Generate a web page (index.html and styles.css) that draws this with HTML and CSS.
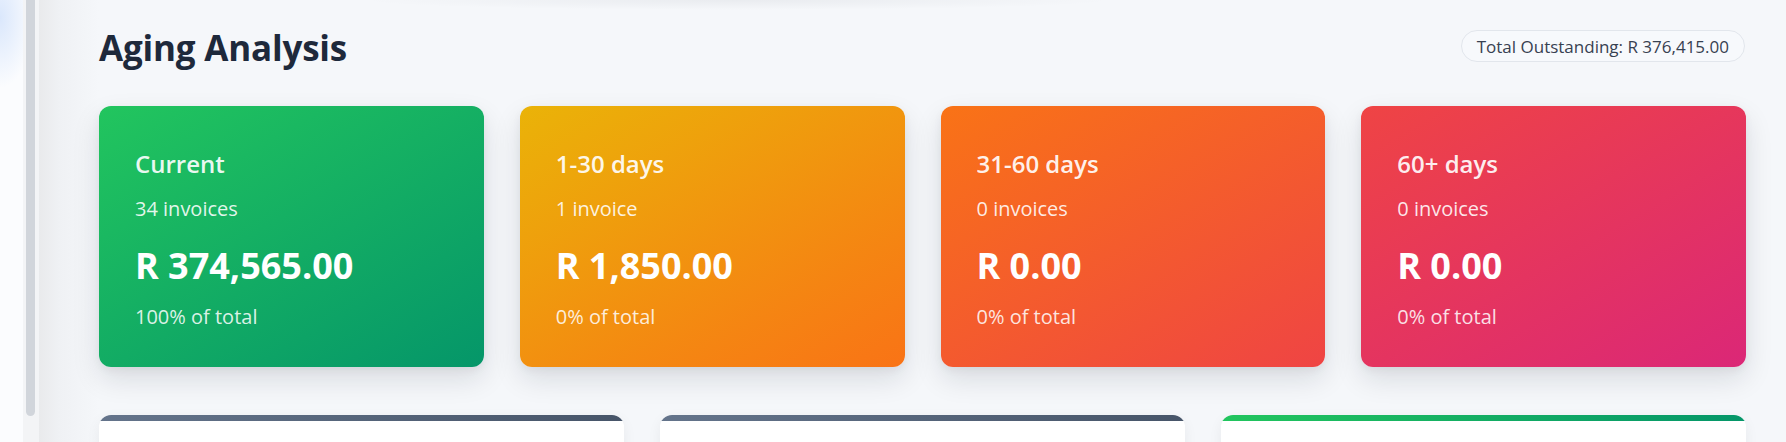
FILE: index.html
```html
<!DOCTYPE html>
<html lang="en">
<head>
<meta charset="utf-8">
<title>Aging Analysis</title>
<link rel="stylesheet" href="styles.css">
</head>
<body>
<div class="app">
  <aside class="side-edge"></aside>
  <div class="scroll-track"><div class="scroll-thumb"></div></div>
  <main class="main">
    <header class="page-head">
      <h1 class="page-title">Aging Analysis</h1>
      <span class="total-pill">Total Outstanding: R 376,415.00</span>
    </header>
    <section class="aging-grid">
      <article class="aging-card card-current">
        <h2 class="card-title">Current</h2>
        <p class="card-count">34 invoices</p>
        <p class="card-amount">R 374,565.00</p>
        <p class="card-share">100% of total</p>
      </article>
      <article class="aging-card card-30">
        <h2 class="card-title">1-30 days</h2>
        <p class="card-count">1 invoice</p>
        <p class="card-amount">R 1,850.00</p>
        <p class="card-share">0% of total</p>
      </article>
      <article class="aging-card card-60">
        <h2 class="card-title">31-60 days</h2>
        <p class="card-count">0 invoices</p>
        <p class="card-amount">R 0.00</p>
        <p class="card-share">0% of total</p>
      </article>
      <article class="aging-card card-90">
        <h2 class="card-title">60+ days</h2>
        <p class="card-count">0 invoices</p>
        <p class="card-amount">R 0.00</p>
        <p class="card-share">0% of total</p>
      </article>
    </section>
    <section class="panel-grid">
      <div class="panel panel-slate"></div>
      <div class="panel panel-slate"></div>
      <div class="panel panel-green"></div>
    </section>
  </main>
</div>
</body>
</html>
```

FILE: styles.css
```css
* { box-sizing: border-box; }

html, body {
  margin: 0;
  padding: 0;
  height: 442px;
  overflow: hidden;
}

body {
  font-family: "Open Sans", "Noto Sans", "Liberation Sans", sans-serif;
  background: #f5f7fa;
}

.app {
  display: flex;
  height: 442px;
  overflow: hidden;
}

.side-edge {
  width: 23px;
  flex: none;
  background:
    radial-gradient(ellipse 34px 70px at 0 18px, rgba(191, 214, 250, 0.55), rgba(255, 255, 255, 0) 100%),
    #fbfcfe;
}

.scroll-track {
  width: 16px;
  flex: none;
  background: #f3f4f6;
  padding-left: 3px;
}

.scroll-thumb {
  width: 9px;
  height: 416px;
  background: #d1d5db;
  border-radius: 0 0 5px 5px;
}

.main {
  flex: 1;
  min-width: 0;
  padding: 26px 40px 0 60px;
  background:
    radial-gradient(ellipse 380px 10px at 40% 0, rgba(15, 23, 42, 0.05), rgba(15, 23, 42, 0) 100%),
    linear-gradient(to right, #e9eaec 0, #eff1f4 20px, rgba(245, 247, 250, 0) 60px),
    #f5f7fa;
}

.page-head {
  display: flex;
  align-items: flex-start;
  justify-content: space-between;
  height: 44px;
}

.page-title {
  margin: 0;
  font-size: 35px;
  font-weight: 700;
  line-height: 44px;
  color: #1e293b;
  letter-spacing: -0.2px;
}

.total-pill {
  display: inline-flex;
  align-items: center;
  height: 32px;
  margin-top: 4px;
  padding: 0 15px;
  border: 1px solid #e2e6ec;
  border-radius: 999px;
  background: #f7f9fc;
  color: #374151;
  font-size: 17px;
  font-weight: 500;
  margin-right: 1px;
}

.aging-grid {
  display: grid;
  grid-template-columns: repeat(4, 1fr);
  gap: 36px;
  margin-top: 36px;
}

.aging-card {
  height: 261px;
  border-radius: 12px;
  padding: 42px 36px 0;
  color: #fff;
  box-shadow: 0 12px 28px rgba(15, 23, 42, 0.12), 0 3px 8px rgba(15, 23, 42, 0.05);
}

.card-current { background: linear-gradient(150deg, #22c55e 0%, #059669 100%); }
.card-30 { background: linear-gradient(150deg, #eab308 0%, #f97316 100%); }
.card-60 { background: linear-gradient(150deg, #f97316 0%, #ef4444 100%); }
.card-90 { background: linear-gradient(150deg, #ef4444 0%, #db2777 100%); }

.card-title {
  margin: 0;
  font-size: 24px;
  font-weight: 600;
  line-height: 32px;
  color: rgba(255, 255, 255, 0.92);
}

.card-count {
  margin: 15px 0 0;
  font-size: 20px;
  line-height: 28px;
  color: rgba(255, 255, 255, 0.88);
}

.card-amount {
  margin: 19px 0 0;
  font-size: 36px;
  font-weight: 700;
  line-height: 48px;
  color: #fff;
}

.card-share {
  margin: 13px 0 0;
  font-size: 20px;
  line-height: 28px;
  color: rgba(255, 255, 255, 0.86);
}

.panel-grid {
  display: grid;
  grid-template-columns: repeat(3, 1fr);
  gap: 36px;
  margin-top: 48px;
}

.panel {
  height: 120px;
  background: #fff;
  border-radius: 12px;
  overflow: hidden;
  box-shadow: 0 4px 14px rgba(15, 23, 42, 0.06);
}

.panel::before {
  content: "";
  display: block;
  height: 6px;
}

.panel-slate::before { background: linear-gradient(90deg, #64748b, #475569); }
.panel-green::before { background: linear-gradient(90deg, #22c55e, #059669); }
```
